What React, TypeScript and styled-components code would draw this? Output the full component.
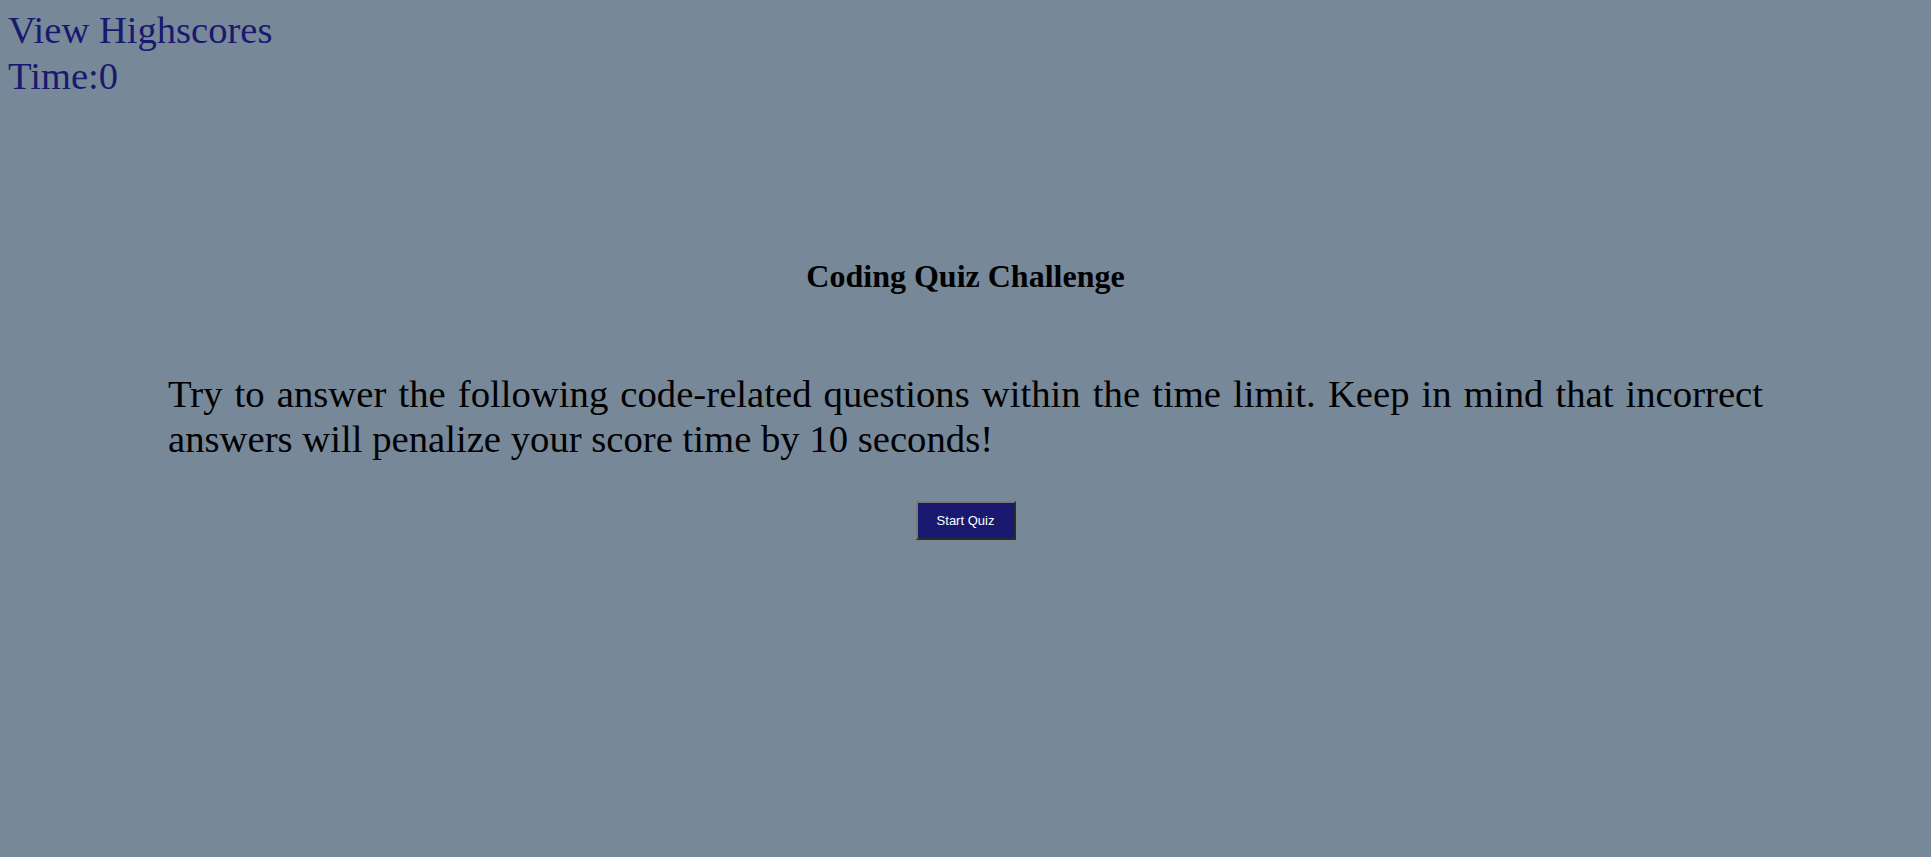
import React from "react";
import styled, { createGlobalStyle } from "styled-components";

const GlobalStyle = createGlobalStyle`
  html, body {
    margin: 0;
    padding: 0;
    background: #778899;
  }
  body {
    margin: 8px;
    font-family: "Liberation Serif", "Times New Roman", serif;
    color: #000;
  }
`;

const Header = styled.header`
  display: flex;
  flex-direction: column;
  align-items: flex-start;
`;

const HeaderLink = styled.a`
  font-size: 38.6px;
  line-height: 45.7px;
  color: #191970;
  text-decoration: none;
  cursor: pointer;
`;

const Timer = styled.div`
  font-size: 38.6px;
  line-height: 45.7px;
  color: #191970;
`;

const Main = styled.main`
  display: flex;
  flex-direction: column;
  align-items: center;
  margin: 159px 160px 0;
`;

const Title = styled.h1`
  margin: 0;
  font-size: 32px;
  line-height: 37px;
  font-weight: bold;
  text-align: center;
`;

const Intro = styled.p`
  align-self: stretch;
  margin: 77px 0 0;
  font-size: 38.7px;
  line-height: 44.5px;
  text-align: justify;
`;

const StartButton = styled.button`
  margin-top: 40px;
  width: 100px;
  height: 39px;
  background: #191970;
  color: #fff;
  font-family: "Liberation Sans", Arial, sans-serif;
  font-size: 13px;
  border-style: solid;
  border-width: 2px;
  border-color: #7a7a7a #2b2b2b #2b2b2b #7a7a7a;
  padding: 0;
  cursor: pointer;
`;

export default function App() {
  return (
    <>
      <GlobalStyle />
      <Header>
        <HeaderLink href="#">View Highscores</HeaderLink>
        <Timer>Time:0</Timer>
      </Header>
      <Main>
        <Title>Coding Quiz Challenge</Title>
        <Intro>
          Try to answer the following code-related questions within the time
          limit. Keep in mind that incorrect answers will penalize your score
          time by 10 seconds!
        </Intro>
        <StartButton>Start Quiz</StartButton>
      </Main>
    </>
  );
}
